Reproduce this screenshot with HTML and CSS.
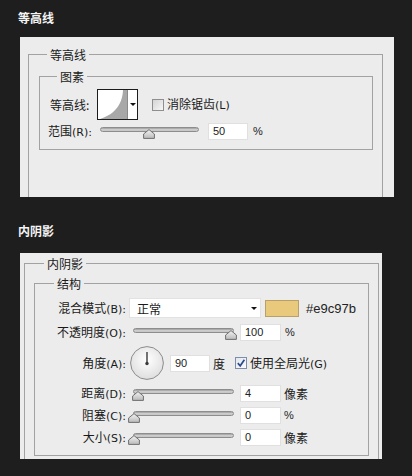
FILE: index.html
```html
<!DOCTYPE html>
<html lang="zh">
<head>
<meta charset="utf-8">
<title>图层样式</title>
<link rel="stylesheet" href="styles.css">
</head>
<body>
<svg class="defs" width="0" height="0" aria-hidden="true">
  <defs>
    <linearGradient id="thumbGrad" x1="0" y1="0" x2="0" y2="1">
      <stop offset="0" stop-color="#f4f4f4"/>
      <stop offset="1" stop-color="#b9b9b9"/>
    </linearGradient>
    <radialGradient id="dialGrad" cx="50%" cy="40%" r="60%">
      <stop offset="0" stop-color="#ffffff"/>
      <stop offset="1" stop-color="#dedede"/>
    </radialGradient>
    <symbol id="thumb" viewBox="0 0 12 10">
      <path d="M6 0.6 L11.4 5 L11.4 9.4 L0.6 9.4 L0.6 5 Z" fill="url(#thumbGrad)" stroke="#6f6f6f" stroke-width="1"/>
    </symbol>
  </defs>
</svg>

<h2 class="title t1">等高线</h2>
<section class="panel p1">
  <fieldset class="group o1">
    <legend>等高线</legend>
    <fieldset class="group i1">
      <legend>图素</legend>
      <div class="row r-contour">
        <span class="lbl lbl-contour">等高线:</span>
        <div class="picker">
          <div class="preview">
            <svg width="29" height="29" viewBox="0 0 29 29"><path d="M25 0 C24.5 13 18 24 2 29 L29 29 L29 0 Z" fill="#a8a8a8"/></svg>
          </div>
          <div class="drop"><span class="arrow"></span></div>
        </div>
        <span class="check c1"><span class="box"></span><span class="ctext">消除锯齿<span class="k">(L)</span></span></span>
      </div>
      <div class="row r-range">
        <span class="lbl lbl-range">范围<span class="k">(R):</span></span>
        <div class="slider s1">
          <div class="track"></div>
          <svg class="thumb" style="left:43px" viewBox="0 0 12 10"><use href="#thumb"/></svg>
        </div>
        <span class="num n1">50</span>
        <span class="unit pct">%</span>
      </div>
    </fieldset>
  </fieldset>
</section>

<h2 class="title t2">内阴影</h2>
<section class="panel p2">
  <fieldset class="group o2">
    <legend>内阴影</legend>
    <fieldset class="group i2">
      <legend>结构</legend>
      <div class="rows">
        <div class="row h20">
          <span class="lbl col">混合模式<span class="k">(B):</span></span>
          <div class="select"><span>正常</span><span class="arrow"></span></div>
          <span class="swatch"></span>
          <span class="hex">#e9c97b</span>
        </div>
        <div class="row h20">
          <span class="lbl col">不透明度<span class="k">(O):</span></span>
          <div class="slider s2">
            <div class="track"></div>
            <svg class="thumb" style="left:92px" viewBox="0 0 12 10"><use href="#thumb"/></svg>
          </div>
          <span class="num n2">100</span>
          <span class="unit pct u2">%</span>
        </div>
        <div class="row h34">
          <span class="lbl col">角度<span class="k">(A):</span></span>
          <svg class="dial" width="34" height="34" viewBox="0 0 34 34">
            <circle cx="17" cy="17" r="16.4" fill="url(#dialGrad)" stroke="#8c8c8c" stroke-width="1"/>
            <line x1="17" y1="17.5" x2="17" y2="6" stroke="#3a3a3a" stroke-width="1.4"/>
            <circle cx="17" cy="17.5" r="1.7" fill="#3a3a3a"/>
          </svg>
          <span class="num n3">90</span>
          <span class="unit deg">度</span>
          <span class="check c2"><span class="box on"><svg width="10" height="10" viewBox="0 0 10 10"><path d="M1.8 5.2 L4.2 7.8 L8.4 1.8" fill="none" stroke="#2c4a8c" stroke-width="1.7"/></svg></span><span class="ctext">使用全局光<span class="k">(G)</span></span></span>
        </div>
        <div class="row h18">
          <span class="lbl col">距离<span class="k">(D):</span></span>
          <div class="slider s2">
            <div class="track"></div>
            <svg class="thumb" style="left:-1px" viewBox="0 0 12 10"><use href="#thumb"/></svg>
          </div>
          <span class="num n2">4</span>
          <span class="unit u3">像素</span>
        </div>
        <div class="row h18">
          <span class="lbl col">阻塞<span class="k">(C):</span></span>
          <div class="slider s2">
            <div class="track"></div>
            <svg class="thumb" style="left:-5px" viewBox="0 0 12 10"><use href="#thumb"/></svg>
          </div>
          <span class="num n2">0</span>
          <span class="unit pct u3">%</span>
        </div>
        <div class="row h18">
          <span class="lbl col">大小<span class="k">(S):</span></span>
          <div class="slider s2">
            <div class="track"></div>
            <svg class="thumb" style="left:-5px" viewBox="0 0 12 10"><use href="#thumb"/></svg>
          </div>
          <span class="num n2">0</span>
          <span class="unit u3">像素</span>
        </div>
      </div>
    </fieldset>
  </fieldset>
</section>
</body>
</html>
```

FILE: styles.css
```css
* { box-sizing: border-box; }

html, body {
  margin: 0;
  padding: 0;
}

body {
  width: 412px;
  height: 476px;
  overflow: hidden;
  background: #1e1e1e;
  font-family: "Noto Sans CJK SC", "Noto Sans", sans-serif;
  font-size: 12px;
  color: #1a1a1a;
}

.defs { position: absolute; width: 0; height: 0; overflow: hidden; }

.title {
  margin: 0;
  padding-left: 18px;
  font-size: 12px;
  line-height: 15px;
  font-weight: 700;
  color: #f4f4f4;
}
.t1 { padding-top: 10px; }
.t2 { margin-top: 26px; }

.panel {
  margin-left: 20px;
  background: #ececec;
  overflow: hidden;
}
.p1 {
  margin-top: 12px;
  width: 374px;
  height: 160px;
  padding: 10px 11px 0 8px;
}
.p2 {
  margin-top: 15px;
  width: 362px;
  height: 206px;
  padding: 3px 3px 0 4px;
}

.group {
  margin: 0;
  min-width: 0;
  border: 1px solid #a2a2a2;
}
.group > legend {
  padding: 0 3px;
  font-size: 12px;
  line-height: 15px;
  color: #1a1a1a;
}

.o1 { padding: 7px 9px 60px 10px; }
.o1 > legend { margin-left: 8px; }
.i1 { padding: 5px 10px 9px 10px; }
.i1 > legend { margin-left: 7px; }

.o2 { padding: 5px 9px 60px 9px; }
.o2 > legend { margin-left: 10px; }
.i2 { padding: 7px 10px 9px 10px; }
.i2 > legend { margin-left: 9px; }

.row {
  display: flex;
  align-items: center;
}

.lbl {
  line-height: 15px;
  white-space: nowrap;
}
.k {
  font-family: "DejaVu Sans", sans-serif;
  font-size: 11px;
}

/* contour row */
.r-contour { height: 31px; }
.lbl-contour { width: 47px; }

.picker {
  display: flex;
  width: 41px;
  height: 31px;
  border: 1px solid #1c1c1c;
  background: #fff;
}
.preview {
  width: 30px;
  height: 29px;
  border-right: 1px solid #8a8a8a;
  background: #fff;
}
.preview svg { display: block; }
.drop {
  flex: 1;
  display: flex;
  align-items: center;
  justify-content: center;
}

.arrow {
  width: 0;
  height: 0;
  border-left: 3px solid transparent;
  border-right: 3px solid transparent;
  border-top: 3px solid #111;
}

.check {
  display: flex;
  align-items: center;
  line-height: 15px;
}
.c1 { margin-left: 14px; }
.c2 { margin-left: 10px; }
.box {
  width: 12px;
  height: 12px;
  border: 1px solid #8e8e8e;
  background: linear-gradient(135deg, #d4d4d4, #f6f6f6);
  display: flex;
  align-items: center;
  justify-content: center;
}
.box.on {
  border-color: #7f8ea8;
  background: linear-gradient(135deg, #e2e6ee, #fbfbfd);
}
.box svg { display: block; }
.ctext { margin-left: 3px; white-space: nowrap; }

/* range row */
.r-range { height: 17px; margin-top: 3px; }
.lbl-range { width: 52px; margin-left: -2px; }

.slider {
  position: relative;
  height: 17px;
}
.s1 { width: 99px; }
.s2 { width: 101px; margin-left: 7px; }

.track {
  margin-top: 4px;
  height: 5px;
  border-radius: 3px;
  border: 1px solid #8d8d8d;
  background: linear-gradient(to bottom, #9c9c9c, #d6d6d6 60%, #bdbdbd);
}
.thumb {
  position: absolute;
  top: 6px;
  width: 12px;
  height: 10px;
  display: block;
}

.num {
  height: 17px;
  background: #fff;
  border: 1px solid #e0e0e0;
  padding-left: 4px;
  font-family: "Liberation Sans", Arial, sans-serif;
  font-size: 11px;
  line-height: 15px;
  color: #222;
}
.n1 { width: 40px; margin-left: 9px; }
.n2 { width: 41px; margin-left: 6px; }
.n3 { width: 40px; margin-left: 6px; }

.unit {
  line-height: 15px;
  white-space: nowrap;
}
.pct {
  font-family: "Liberation Sans", Arial, sans-serif;
  font-size: 11px;
  color: #222;
  margin-left: 5px;
}
.u2 { margin-left: 4px; }
.u3 { margin-left: 3px; }
.deg { margin-left: 3px; }

/* inner shadow rows */
.rows {
  display: flex;
  flex-direction: column;
  gap: 4px;
}
.h20 { height: 20px; }
.h34 { height: 34px; }
.h18 { height: 18px; }

.col {
  width: 81px;
  text-align: right;
}

.select {
  margin-left: 3px;
  width: 132px;
  height: 20px;
  background: #fff;
  border: 1px solid #e2e2e2;
  display: flex;
  align-items: center;
  justify-content: space-between;
  padding: 0 3px 0 7px;
  line-height: 15px;
}

.swatch {
  margin-left: 4px;
  width: 34px;
  height: 17px;
  background: #e9c97b;
  border: 1px solid #b9a069;
}
.hex {
  margin-left: 7px;
  font-family: "Liberation Sans", Arial, sans-serif;
  font-size: 13px;
  line-height: 15px;
  color: #222;
}

.dial {
  display: block;
  margin-left: 4px;
}
```
